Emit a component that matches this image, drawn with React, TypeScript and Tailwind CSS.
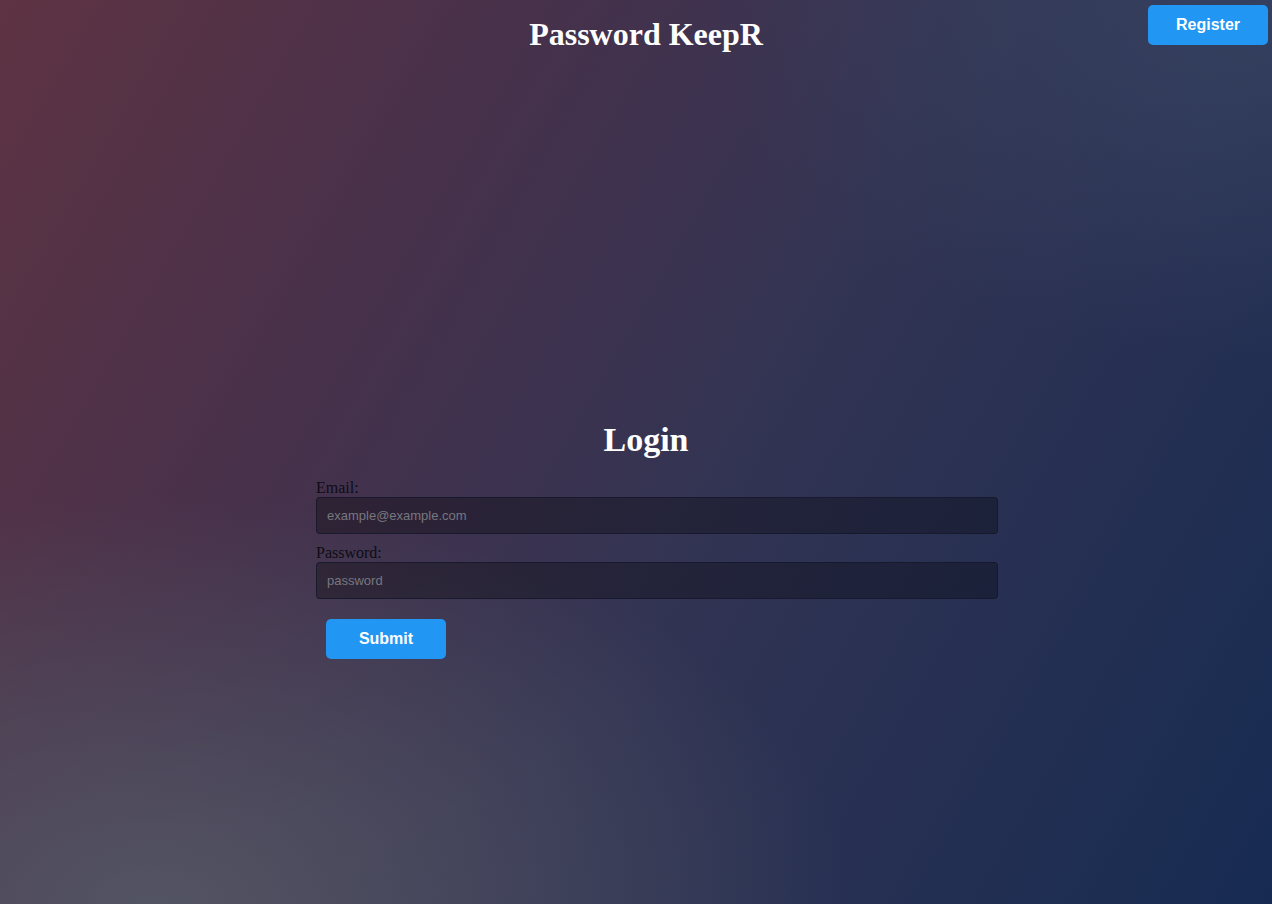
import React from "react";

export default function App() {
  return (
    <div
      className="min-h-screen w-full bg-[radial-gradient(ellipse_55%_45%_at_12%_100%,rgba(84,86,100,0.95)_0%,rgba(84,86,100,0)_100%),radial-gradient(ellipse_45%_40%_at_100%_0%,rgba(56,68,98,0.8)_0%,rgba(56,68,98,0)_100%),linear-gradient(120deg,#5e3343_0%,#47314b_30%,#333453_55%,#172b52_100%)]"
      style={{ fontFamily: '"Liberation Serif", "Times New Roman", serif' }}
    >
      <header className="flex items-start">
        <div className="flex-1" />
        <h1 className="ml-[20px] mt-[16px] text-[32px] leading-[36px] font-bold text-white">
          Password KeepR
        </h1>
        <div className="flex flex-1 justify-end">
          <button className="mt-[5px] mr-[4px] h-[40px] w-[120px] rounded-[5px] bg-[#2196f3] text-[16px] font-bold text-white font-['Liberation_Sans',Arial,sans-serif]">
            Register
          </button>
        </div>
      </header>

      <main className="flex flex-col">
        <h2 className="mt-[369px] ml-[20px] text-center text-[34px] leading-[38px] font-bold text-white">
          Login
        </h2>
        <form className="mt-[20px] ml-[316px] flex w-[682px] flex-col">
          <label className="text-[16px] leading-[18px] text-[#0d0d14]">Email:</label>
          <input
            type="email"
            placeholder="example@example.com"
            className="h-[37px] w-full rounded-[4px] border border-[#15172a]/80 bg-black/30 px-[10px] text-[13px] text-white placeholder:text-[#77777f] font-['Liberation_Sans',Arial,sans-serif] outline-none"
          />
          <label className="mt-[10px] text-[16px] leading-[18px] text-[#0d0d14]">Password:</label>
          <input
            type="password"
            placeholder="password"
            className="h-[37px] w-full rounded-[4px] border border-[#15172a]/80 bg-black/30 px-[10px] text-[13px] text-white placeholder:text-[#77777f] font-['Liberation_Sans',Arial,sans-serif] outline-none"
          />
          <div>
            <button
              type="button"
              className="mt-[20px] ml-[10px] h-[40px] w-[120px] rounded-[5px] bg-[#2196f3] text-[16px] font-bold text-white font-['Liberation_Sans',Arial,sans-serif]"
            >
              Submit
            </button>
          </div>
        </form>
      </main>
    </div>
  );
}
